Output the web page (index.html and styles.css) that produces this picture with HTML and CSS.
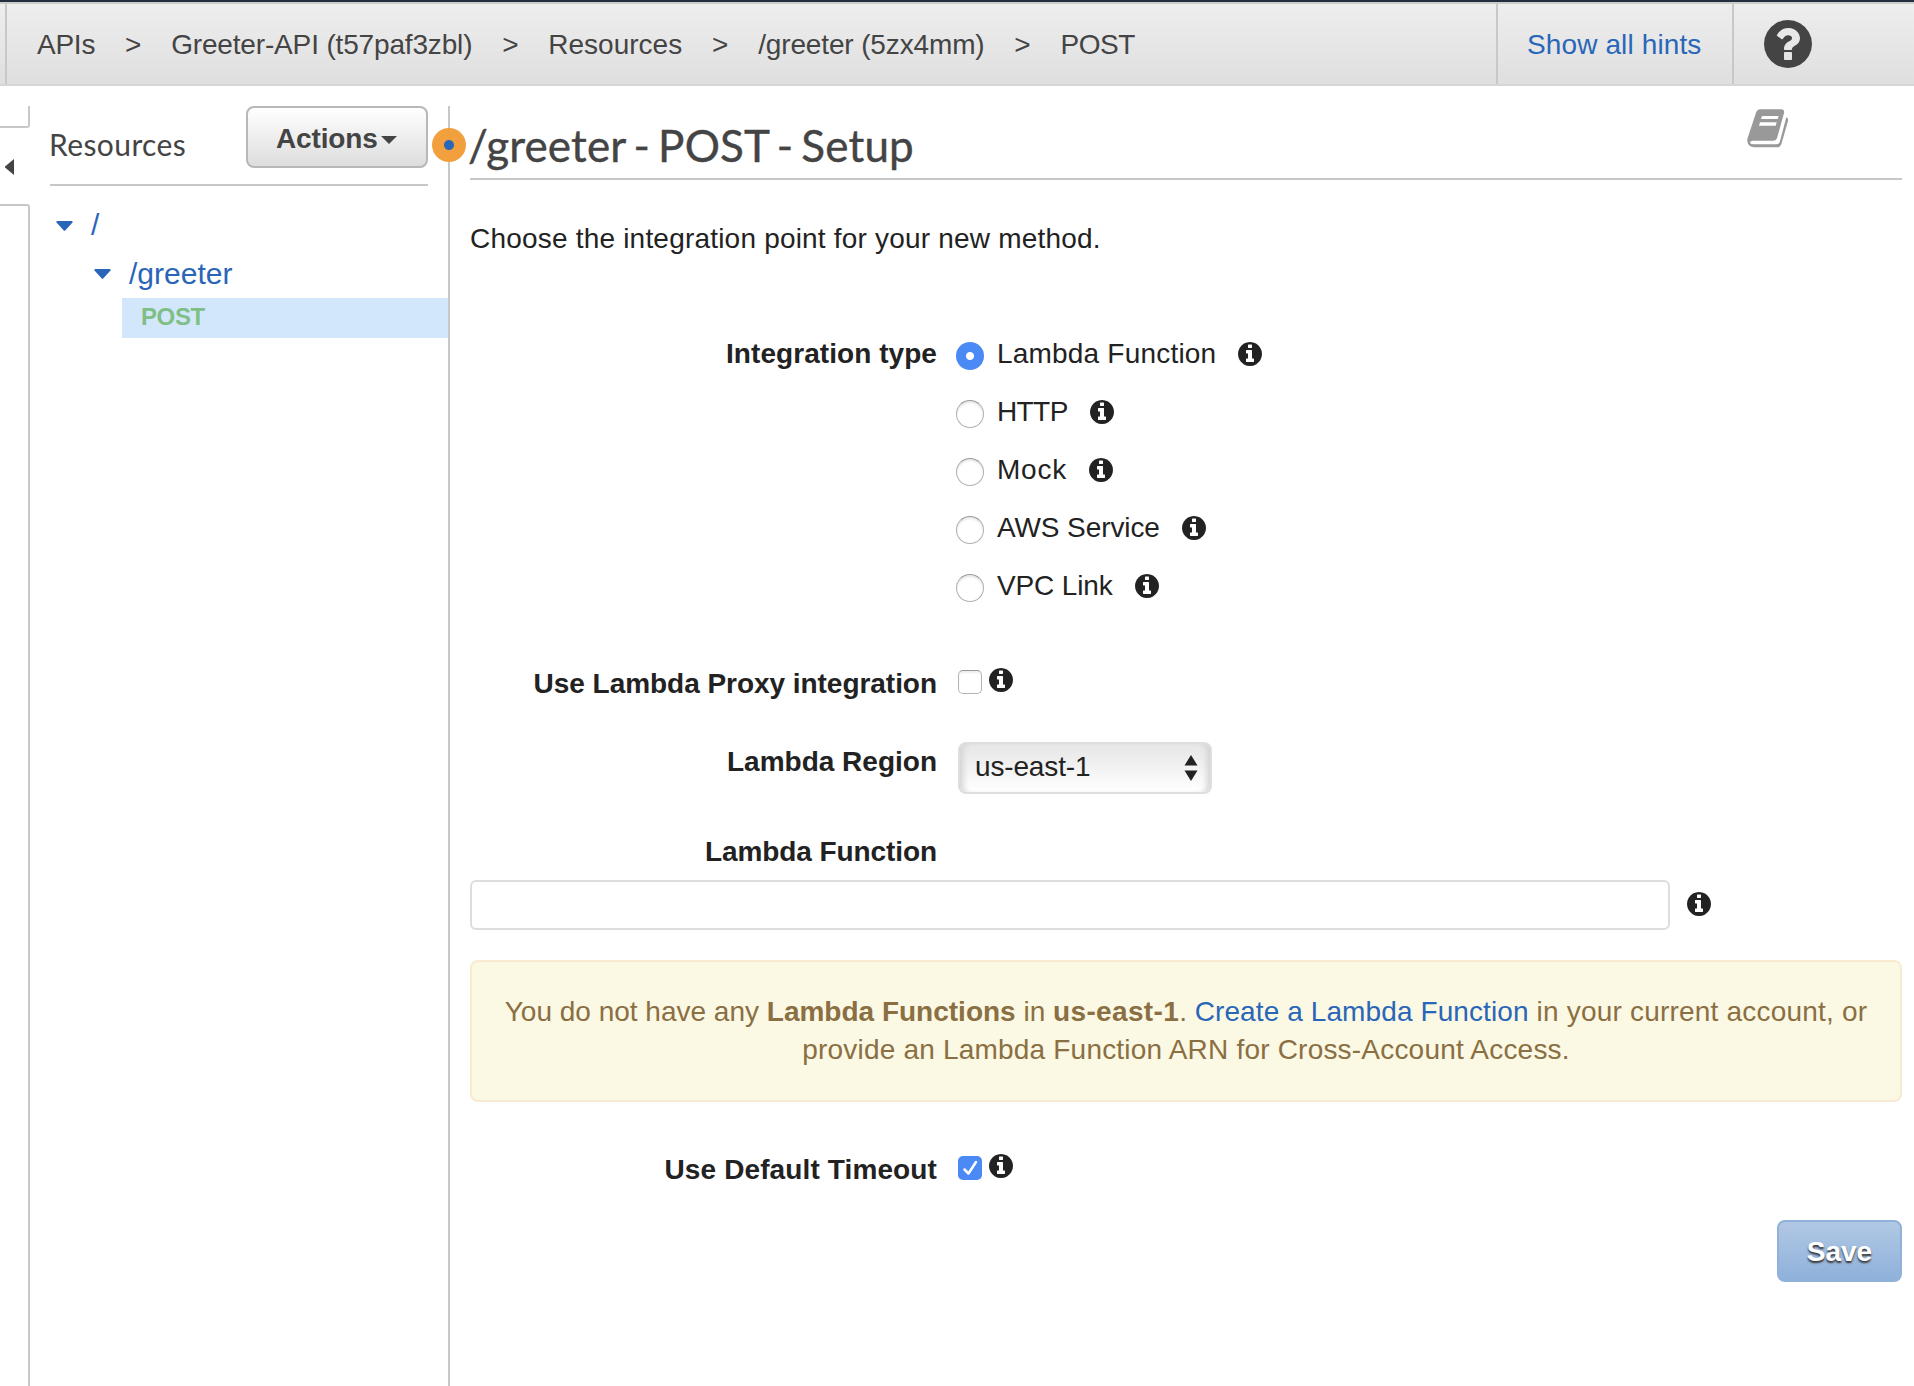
FILE: index.html
```html
<!DOCTYPE html>
<html lang="en">
<head>
<meta charset="utf-8">
<title>API Gateway</title>
<link rel="stylesheet" href="styles.css">
</head>
<body>
<svg class="sprite" aria-hidden="true">
  <symbol id="info" viewBox="128 128 1536 1536"><path d="M1152 1376v-160q0-14-9-23t-23-9h-96v-512q0-14-9-23t-23-9h-320q-14 0-23 9t-9 23v160q0 14 9 23t23 9h96v320h-96q-14 0-23 9t-9 23v160q0 14 9 23t23 9h448q14 0 23-9t9-23zm-128-896v-160q0-14-9-23t-23-9h-192q-14 0-23 9t-9 23v160q0 14 9 23t23 9h192q14 0 23-9t9-23zm640 416q0 209-103 385.5t-279.5 279.5-385.5 103-385.5-103-279.5-279.5-103-385.5 103-385.5 279.5-279.5 385.5-103 385.5 103 279.5 279.5 103 385.5z"/></symbol>
</svg>
<header class="topbar">
  <nav class="crumbs">
    <span class="c1">APIs</span><i>&gt;</i><span class="c2">Greeter-API (t57paf3zbl)</span><i>&gt;</i><span class="c3">Resources</span><i>&gt;</i><span class="c4">/greeter (5zx4mm)</span><i>&gt;</i><span class="c5">POST</span>
  </nav>
  <a class="hints"><span>Show all hints</span></a>
  <div class="help">
    <svg width="48" height="48" viewBox="128 128 1536 1536"><path d="M1024 1376v-192q0-14-9-23t-23-9h-192q-14 0-23 9t-9 23v192q0 14 9 23t23 9h192q14 0 23-9t9-23zm256-672q0-88-55.5-163t-138.5-116-170-41q-243 0-371 213-15 24 8 42l132 100q7 6 19 6 16 0 25-12 53-68 86-92 34-24 86-24 48 0 85.5 26t37.5 59q0 38-20 61t-68 45q-63 28-115.5 86.5t-52.5 125.5v36q0 14 9 23t23 9h192q14 0 23-9t9-23q0-19 21.5-49.5t54.5-49.5q32-18 49-28.5t46-35 44.5-48 28-60.5 12.5-81zm384 192q0 209-103 385.5t-279.5 279.5-385.5 103-385.5-103-279.5-279.5-103-385.5 103-385.5 279.5-279.5 385.5-103 385.5 103 279.5 279.5 103 385.5z"/></svg>
  </div>
</header>
<div class="layout">
  <aside class="rail">
    <div class="rail-top"></div>
    <div class="rail-tab"><svg width="10" height="16" viewBox="0 0 10 16"><path d="M9 0v16L0 8.5v-1z"/></svg></div>
    <div class="rail-body"></div>
  </aside>
  <section class="sidebar">
    <div class="side-head">
      <h2><span>Resources</span></h2>
      <button class="actions"><span>Actions</span><svg width="16" height="8" viewBox="0 0 16 8"><path d="M0 0h16L8 8z"/></svg></button>
    </div>
    <div class="tree">
      <div class="node root"><svg width="17" height="10" viewBox="0 0 17 10"><path d="M1 0h15q1 .5.5 1.500L9 9.800H8L.5 1.500Q0 .5 1 0z"/></svg><span>/</span></div>
      <div class="node child"><svg width="17" height="10" viewBox="0 0 17 10"><path d="M1 0h15q1 .5.5 1.500L9 9.800H8L.5 1.500Q0 .5 1 0z"/></svg><span>/greeter</span></div>
      <div class="method"><span>POST</span></div>
    </div>
  </section>
  <main class="content">
    <div class="hint-dot"></div>
    <div class="title">
      <h1><span>/greeter - POST - Setup</span></h1>
      <svg width="42" height="38.700" viewBox="920 326 126 116"><path fill-rule="evenodd" d="M960 327H1024Q1034 328 1031 338L1010 414Q1007 421 1000 421H935Q928 423 930 429Q932 432 940 432H1008Q1016 432 1018 426L1038 351Q1045 354 1043 362L1023 432Q1020 441 1010 441H940Q919 438 921 416L946 340Q950 327 960 327ZM965 347L962 356H1012L1015 347ZM959 366L956 376H1006L1009 366Z"/></svg>
    </div>
    <p class="intro"><span>Choose the integration point for your new method.</span></p>
    <div class="field types">
      <label class="name"><span class="n1">Integration type</span></label>
      <div class="options">
        <label class="opt"><i class="radio on"></i><span class="o1">Lambda Function</span><svg class="info"><use href="#info"/></svg></label>
        <label class="opt"><i class="radio"></i><span class="o2">HTTP</span><svg class="info"><use href="#info"/></svg></label>
        <label class="opt"><i class="radio"></i><span class="o3">Mock</span><svg class="info"><use href="#info"/></svg></label>
        <label class="opt"><i class="radio"></i><span class="o4">AWS Service</span><svg class="info"><use href="#info"/></svg></label>
        <label class="opt"><i class="radio"></i><span class="o5">VPC Link</span><svg class="info"><use href="#info"/></svg></label>
      </div>
    </div>
    <div class="field proxy">
      <label class="name"><span class="n2">Use Lambda Proxy integration</span></label>
      <i class="check"></i><svg class="info"><use href="#info"/></svg>
    </div>
    <div class="field region">
      <label class="name"><span class="n3">Lambda Region</span></label>
      <div class="select"><span>us-east-1</span><svg width="14" height="26" viewBox="0 0 14 26"><path d="M7 0l6.500 10.500H.5zM.5 15.500h13L7 26z"/></svg></div>
    </div>
    <div class="field function">
      <label class="name"><span class="n4">Lambda Function</span></label>
    </div>
    <div class="function-input"><div class="input"></div><svg class="info"><use href="#info"/></svg></div>
    <div class="alert">
      <p>You do not have any <b>Lambda Functions</b> in <b class="a1">us-east-1</b>. <a>Create a Lambda Function</a><span class="a2"> in your current account, or</span></p>
      <p><span class="a2">provide an Lambda Function ARN for Cross-Account Access.</span></p>
    </div>
    <div class="field timeout">
      <label class="name"><span class="n5">Use Default Timeout</span></label>
      <i class="check on"><svg width="24" height="24" viewBox="0 0 24 24"><path d="M6.500 13.500l4 4 7.500-11.500"/></svg></i><svg class="info"><use href="#info"/></svg>
    </div>
    <div class="footer"><button class="save"><span>Save</span></button></div>
  </main>
</div>
</body>
</html>
```

FILE: styles.css
```css
* { box-sizing: border-box; }
body {
  margin: 0;
  height: 1386px;
  overflow: hidden;
  display: flex;
  flex-direction: column;
  background: #fff;
  color: #222;
  font: 28px/40px "Liberation Sans", Arial, sans-serif;
  white-space: nowrap;
}
h1, h2, p { margin: 0; font-weight: 400; }
i { font-style: normal; }
svg { flex: none; display: block; }
a { color: #2a66b8; }
.sprite { position: absolute; width: 0; height: 0; }
.info { width: 24px; height: 24px; fill: #222; }

.topbar {
  flex: none;
  display: flex;
  height: 86px;
  padding-left: 5px;
  border-top: 2px solid #232f3e;
  border-bottom: 2px solid #d5d5d5;
  background: linear-gradient(#ccc 2px, #eee 2px, #dfdfdf);
  color: #444;
}
.crumbs {
  flex: 1;
  display: flex;
  margin-top: 2px;
  padding: 21px 0 0 30px;
  border-left: 2px solid #c8c8c8;
}
.crumbs i { width: 76px; text-align: center; }
.c1 { letter-spacing: -.25px; }
.c2 { letter-spacing: -.16px; }
.c4 { letter-spacing: -.14px; }
.c5 { letter-spacing: -.5px; }
.hints, .help { margin-top: 2px; border-left: 2px solid #c8c8c8; }
.hints { width: 236px; padding: 21px 0 0 29px; letter-spacing: .12px; }
.help { width: 182px; padding: 16px 0 0 30px; fill: #444; }

.layout { flex: 1; display: flex; padding-top: 20px; }
.rail { width: 30px; display: flex; flex-direction: column; }
.rail-top { height: 22px; border: solid #c8c8c8; border-width: 0 2px 2px 0; border-radius: 0 0 3px 0; }
.rail-tab { height: 76px; padding: 31px 0 0 5px; fill: #444; }
.rail-body { flex: 1; border: solid #c8c8c8; border-width: 2px 2px 0 0; border-radius: 0 3px 0 0; }

.sidebar { width: 418px; padding-left: 20px; }
.side-head {
  display: flex;
  justify-content: space-between;
  width: 378px;
  height: 80px;
  border-bottom: 2px solid #c8c8c8;
}
h2 { margin-left: -1px; padding-top: 18px; font: 30px/40px Lato, sans-serif; letter-spacing: .4px; color: #444; }
.actions {
  display: flex;
  width: 182px;
  height: 62px;
  padding: 11px 0 0 28px;
  border: 2px solid #b8b8b8;
  border-radius: 8px;
  background: linear-gradient(#fff, #ddd);
  color: #444;
  font: bold 28px/40px "Liberation Sans", Arial, sans-serif;
  letter-spacing: -.15px;
}
.actions span { width: 105px; text-align: left; }
.actions svg { margin-top: 17px; fill: #444; }
.tree { padding-top: 19px; color: #2a66b8; fill: #2a66b8; }
.node { display: flex; height: 49px; font-size: 30px; }
.node svg { margin-top: 16px; }
.child svg { margin-top: 15px; }
.node span { margin-left: 18px; }
.root { padding-left: 6px; }
.child { padding-left: 44px; }
.method {
  height: 40px;
  margin: -5px 0 0 72px;
  padding-left: 19px;
  background: #d3e7fc;
  color: #7fbf86;
  font-size: 24px;
  line-height: 38px;
  font-weight: 700;
  letter-spacing: -.4px;
}

.content {
  flex: 1;
  position: relative;
  padding: 0 12px 0 20px;
  border-left: 2px solid #c8c8c8;
}
.hint-dot {
  position: absolute;
  left: -18px;
  top: 22px;
  width: 34px;
  height: 34px;
  border-radius: 50%;
  background: radial-gradient(#2a66b8 4.500px, #f2a03d 5.500px);
}
.title {
  display: flex;
  justify-content: space-between;
  height: 74px;
  padding-right: 113px;
  border-bottom: 2px solid #c8c8c8;
}
h1 {
  margin-left: -2px;
  padding-top: 9px;
  font: 44px/60px Lato, sans-serif;
  letter-spacing: .15px;
  word-spacing: -3.400px;
  -webkit-text-stroke: .4px #444;
  color: #444;
}
.title svg { margin-top: 3px; fill: #999; }
.intro { height: 124px; padding-top: 39px; letter-spacing: .2px; }
.field { display: flex; }
.name { width: 467px; display: flex; justify-content: flex-end; font-weight: 700; }
.types { height: 360px; padding-top: 30px; }
.n1 { letter-spacing: .06px; }
.n2 { letter-spacing: -.04px; }
.n4 { letter-spacing: -.08px; }
.n5 { letter-spacing: .12px; }
.options { margin-left: 19px; }
.opt { display: flex; height: 58px; }
.opt .info { margin: 8px 0 0 22px; }
.opt span { margin-left: 13px; }
.o1 { letter-spacing: .2px; }
.o2 { letter-spacing: -.6px; }
.o3 { letter-spacing: .8px; }
.o4 { letter-spacing: -.1px; }
.o5 { letter-spacing: -.15px; }
.radio {
  width: 28px;
  height: 28px;
  margin-top: 8px;
  border: 1px solid #b0b0b0;
  border-top-color: #999;
  border-radius: 50%;
  box-shadow: inset 0 2px 2px #e8e8e8;
}
.radio.on { border: 0; box-shadow: none; background: radial-gradient(#fff 3.500px, #4b89f5 4.500px); }
.check {
  width: 24px;
  height: 24px;
  margin: 6px 7px 0 21px;
  border: 1px solid #b5b5b5;
  border-top-color: #999;
  border-radius: 5px;
  box-shadow: inset 0 2px 2px #eee;
}
.check.on { border: 0; box-shadow: none; background: #4b89f5; }
.check svg { fill: none; stroke: #fff; stroke-width: 2.500; stroke-linecap: round; stroke-linejoin: round; }
.proxy .info, .timeout .info { margin-top: 4px; }
.proxy { height: 78px; }
.region { height: 90px; }
.select {
  display: flex;
  justify-content: space-between;
  width: 254px;
  height: 52px;
  margin-left: 21px;
  padding: 3px 12px 0 15px;
  border: 2px solid #dedede;
  border-radius: 8px;
  background: linear-gradient(#e6e6e6, #fff);
  box-shadow: inset 7px 0 6px -4px #d2d2d2, inset -7px 0 6px -4px #d2d2d2;
  letter-spacing: -.15px;
}
.select svg { margin-top: 8px; fill: #222; }
.function { height: 48px; }
.function-input { display: flex; height: 80px; }
.input { width: 1200px; height: 50px; border: 2px solid #ddd; border-radius: 6px; }
.function-input .info { margin: 12px 0 0 17px; }
.alert {
  height: 142px;
  padding: 31px 0 0;
  border: 2px solid #f8ebcf;
  border-radius: 8px;
  background: #fbf8e4;
  color: #8a6f43;
  line-height: 38px;
  text-align: center;
}
.a1 { letter-spacing: .35px; }
.a2 { letter-spacing: .2px; }
.alert a { letter-spacing: .1px; }
.timeout { height: 70px; margin-top: 48px; }
.footer { display: flex; justify-content: flex-end; }
.save {
  width: 125px;
  height: 62px;
  padding: 1px 0 0;
  border: 2px solid #8fb1da;
  border-radius: 8px;
  background: linear-gradient(#b1c8e4, #8fb1da);
  color: #fff;
  font: bold 28px/40px "Liberation Sans", Arial, sans-serif;
  text-shadow: 0 2px 2px #333;
}
```
